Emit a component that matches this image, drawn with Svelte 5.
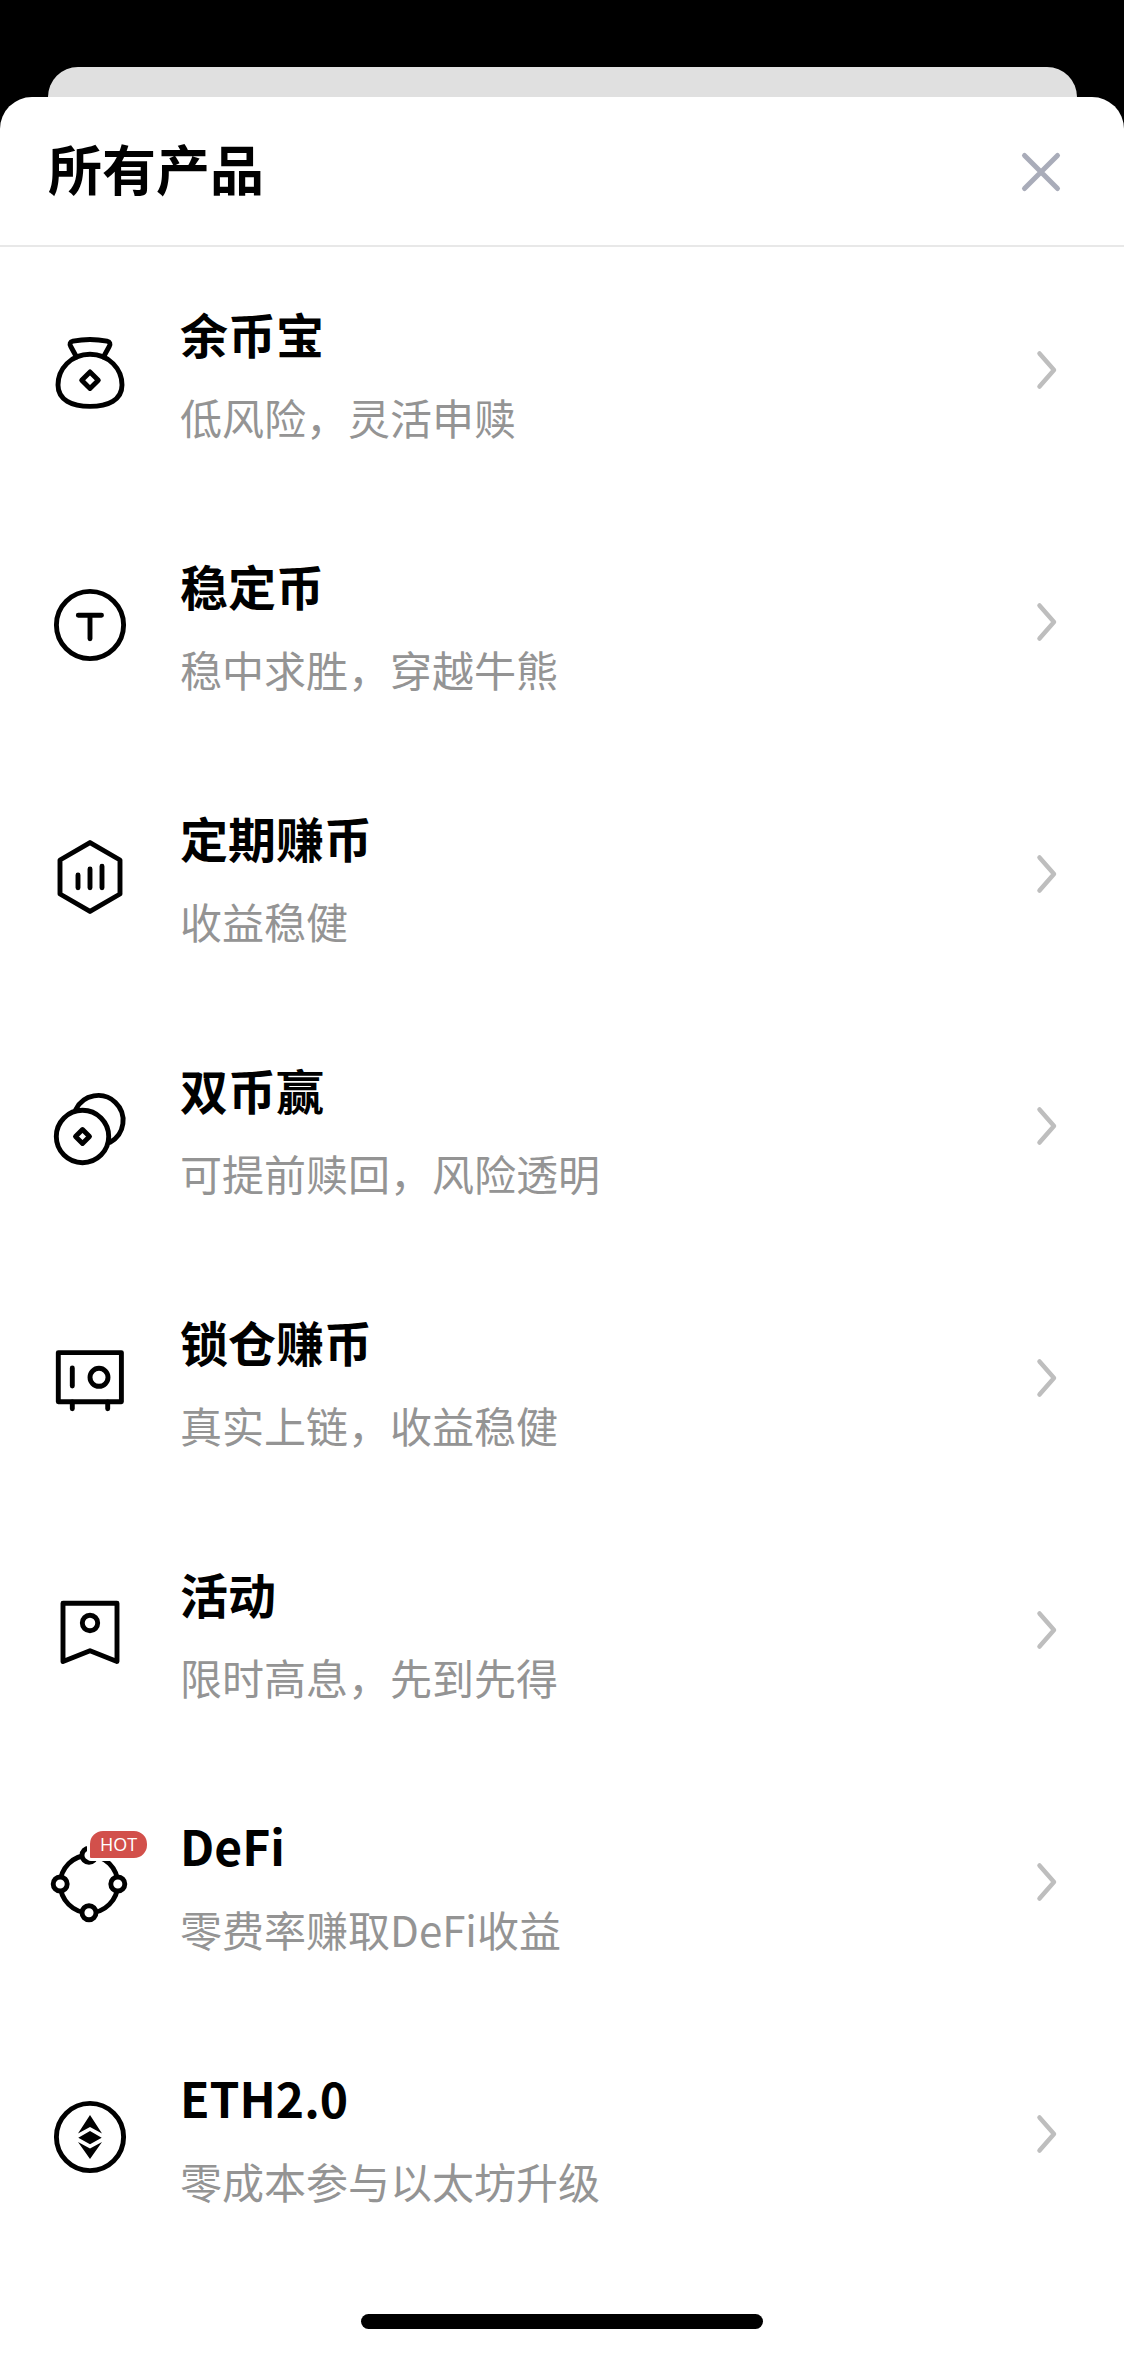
<script>
  let open = $state(true);

  const products = [
    { icon: "bag", name: "余币宝", desc: "低风险，灵活申赎" },
    { icon: "stable", name: "稳定币", desc: "稳中求胜，穿越牛熊" },
    { icon: "fixed", name: "定期赚币", desc: "收益稳健" },
    { icon: "dual", name: "双币赢", desc: "可提前赎回，风险透明" },
    { icon: "safe", name: "锁仓赚币", desc: "真实上链，收益稳健" },
    { icon: "event", name: "活动", desc: "限时高息，先到先得" },
    { icon: "defi", name: "DeFi", desc: "零费率赚取DeFi收益", tag: "HOT" },
    { icon: "eth", name: "ETH2.0", desc: "零成本参与以太坊升级" },
  ];
</script>

{#snippet glyph(icon)}
  <svg class="glyph" viewBox="0 0 84 84" aria-hidden="true">
    {#if icon === "bag"}
      <path d="M28.500 26 22.800 15.500Q20.500 11.300 25 10.200 42 6.800 59 10.200 63.500 11.300 61.200 15.500L55.500 26" />
      <path d="M42 23.300C23 23.300 10 38 10 54 10 69 24 75.400 42 75.400S74 69 74 54C74 38 61 23.300 42 23.300Z" />
      <path d="M42 40.900 50.300 49.200 42 57.500 33.700 49.200Z" />
    {:else if icon === "stable"}
      <circle cx="42" cy="42" r="33.600" />
      <path d="M30.300 32.300H53.500M42 32.300V55.700" />
    {:else if icon === "fixed"}
      <path d="M42 7.600 72 25V59L42 76.400 12 59V25Z" />
      <path d="M30 40V52.700M42 34V52.700M54 31.300V52.700" />
    {:else if icon === "dual"}
      <path d="M27.800 22.500A24.900 24.900 0 1 1 62 55.300" />
      <circle cx="34.500" cy="49.500" r="26.200" />
      <path d="M34.500 42.500 41.500 49.500 34.500 56.500 27.500 49.500Z" />
    {:else if icon === "safe"}
      <path d="M10.300 13.600H73.400V62.700H10.300Z" />
      <path d="M24.300 29V47M24.300 63V69.700M59.700 63V69.700" />
      <circle cx="51" cy="38.300" r="9" />
    {:else if icon === "event"}
      <path d="M15 12.300H69V70.500L42 59.700 15 70.500Z" />
      <circle cx="42" cy="32" r="7.700" />
    {:else if icon === "defi"}
      <circle cx="41" cy="41" r="28.800" />
      <g class="nodes">
        <circle cx="41" cy="12.200" r="7" />
        <circle cx="12.200" cy="41" r="7" />
        <circle cx="69.800" cy="41" r="7" />
        <circle cx="41" cy="69.800" r="7" />
      </g>
    {:else}
      <circle cx="42" cy="42" r="33.600" />
      <path
        class="solid"
        d="M42 20 54 38.500 42 32 30 38.500ZM42 36 53.700 42.700 42 49.300 30.300 42.700ZM30 47 42 53.500 54 47 42 64Z"
      />
    {/if}
  </svg>
{/snippet}

<div class="screen">
  <div class="under"></div>

  {#if open}
    <main class="sheet">
      <header class="head">
        <h1>所有产品</h1>
        <button type="button" class="close" aria-label="关闭" onclick={() => (open = false)}>
          <svg viewBox="0 0 48 48" aria-hidden="true">
            <path d="M8.500 8.500 41.500 41.500M41.500 8.500 8.500 41.500" />
          </svg>
        </button>
      </header>

      <ul class="list">
        {#each products as p}
          <li>
            <a class="row" href={`#${p.icon}`}>
              <span class="icon">
                {@render glyph(p.icon)}
                {#if p.tag}
                  <span class="tag">{p.tag}</span>
                {/if}
              </span>
              <span class="text">
                <span class="name">{p.name}</span>
                <span class="desc">{p.desc}</span>
              </span>
              <svg class="arrow" viewBox="0 0 36 48" aria-hidden="true">
                <path d="M11.500 7.500 26 24 11.500 40.500" />
              </svg>
            </a>
          </li>
        {/each}
      </ul>

      <div class="home"><span></span></div>
    </main>
  {/if}
</div>

<style>
  :global(body) {
    margin: 0;
    background: #000;
  }

  .screen {
    padding-top: 67px;
    font-family: "Noto Sans CJK SC", sans-serif;
    color: #000;
  }

  .under {
    height: 30px;
    margin: 0 47px 0 48px;
    border-radius: 30px 30px 0 0;
    background: #e0e0e0;
  }

  .sheet {
    border-radius: 32px 32px 0 0;
    background: #fff;
  }

  .head {
    display: flex;
    align-items: center;
    justify-content: space-between;
    height: 148px;
    padding: 0 60px 0 48px;
    border-bottom: 2px solid #e8e8e8;
  }

  h1 {
    margin: 0;
    padding-bottom: 6px;
    font-size: 54px;
    line-height: 72px;
    font-weight: 700;
  }

  .close {
    width: 48px;
    height: 48px;
    padding: 0;
    border: none;
    background: none;
    cursor: pointer;
  }
  .close svg {
    display: block;
    fill: none;
    stroke: #a9acb9;
    stroke-width: 5;
    stroke-linecap: round;
  }

  .list {
    margin: 0;
    padding: 0;
    list-style: none;
  }

  .row {
    display: flex;
    align-items: center;
    gap: 48px;
    height: 252px;
    padding: 0 60px 0 48px;
    color: inherit;
    text-decoration: none;
  }

  .icon {
    position: relative;
    flex: none;
    width: 84px;
    height: 84px;
  }

  .glyph {
    display: block;
    width: 84px;
    height: 84px;
    fill: none;
    stroke: #000;
    stroke-width: 4.9;
    stroke-linecap: round;
    stroke-linejoin: round;
  }
  .nodes {
    fill: #fff;
  }
  .solid {
    fill: #000;
    stroke: none;
  }

  .tag {
    position: absolute;
    top: -15px;
    left: 39px;
    width: 57px;
    border: 3px solid #fff;
    border-radius: 16px 16px 16px 4px;
    background: #d2504b;
    color: #fff;
    font-family: "Open Sans", sans-serif;
    font-size: 18px;
    line-height: 27px;
    text-align: center;
  }

  .text {
    display: flex;
    flex: 1;
    flex-direction: column;
    gap: 22px;
    padding-top: 2px;
  }
  .name {
    font-size: 48px;
    line-height: 64px;
    font-weight: 700;
  }
  .desc {
    color: #949494;
    font-size: 42px;
    line-height: 60px;
  }

  .arrow {
    flex: none;
    width: 36px;
    height: 48px;
    margin-bottom: 6px;
    fill: none;
    stroke: #bebebe;
    stroke-width: 4.5;
    stroke-linecap: round;
    stroke-linejoin: round;
  }

  .home {
    display: flex;
    justify-content: center;
    padding: 51px 0 24px;
  }
  .home span {
    width: 402px;
    height: 15px;
    border-radius: 8px;
    background: #000;
  }
</style>
